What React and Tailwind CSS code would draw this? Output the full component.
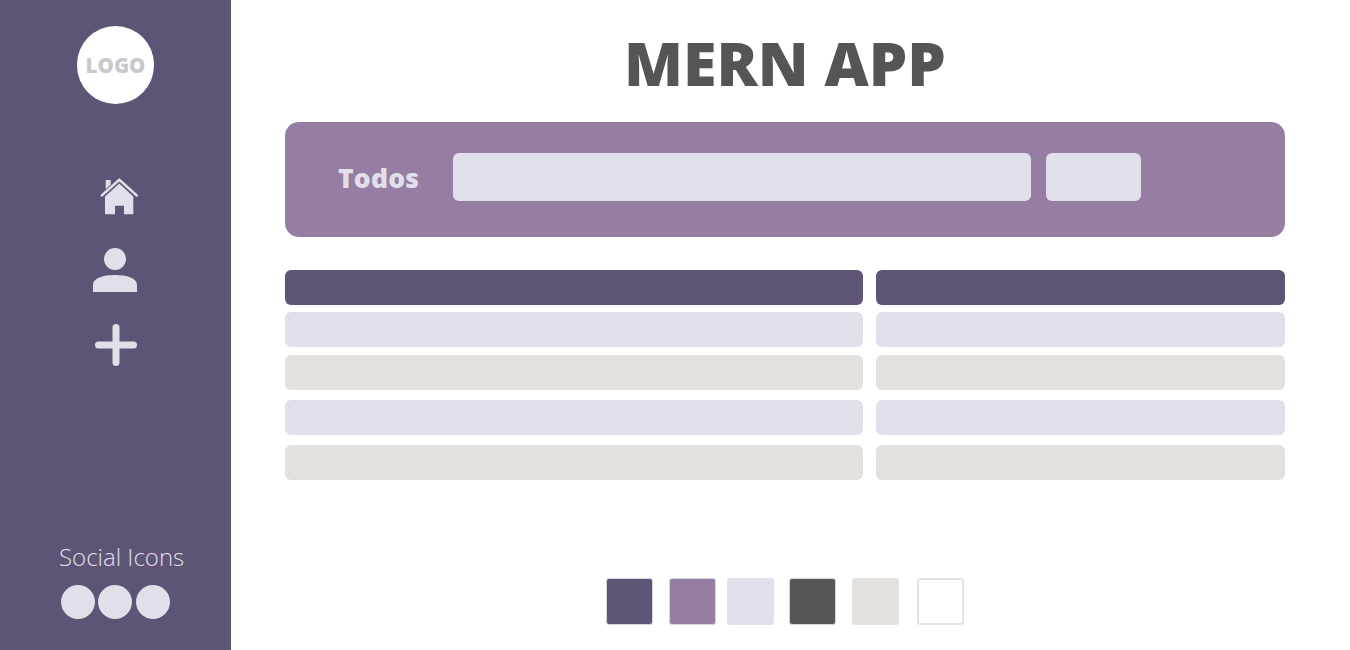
const rows = [
  ["bg-[#5e5475]", "mt-0"],
  ["bg-[#e1dfea]", "mt-[7px]"],
  ["bg-[#e4e0dd]", "mt-[8px]"],
  ["bg-[#e1dfea]", "mt-[10px]"],
  ["bg-[#e4e0dd]", "mt-[10px]"],
];

function Home() {
  return (
    <svg width="40" height="39" viewBox="0 0 40 39" className="block">
      <path d="M5.700 3h5v4.500l-5 4.800z" fill="#e1dfea" />
      <path d="M1.900 18.400 19.300 2.700l17.400 15.700" fill="none" stroke="#e1dfea" strokeWidth="2.600" strokeLinecap="round" strokeLinejoin="miter" />
      <path fillRule="evenodd" d="M5 19.500 19.300 6.500l14 13V37.300H24V28.700H15V37.300H5z" fill="#e1dfea" />
    </svg>
  );
}

function User() {
  return (
    <svg width="44" height="44" viewBox="0 0 44 44" className="block">
      <circle cx="22" cy="11" r="11" fill="#e1dfea" />
      <path d="M0 44V37C0 30 10 27 22 27s22 3 22 10v7z" fill="#e1dfea" />
    </svg>
  );
}

function Plus() {
  return (
    <svg width="42" height="42" viewBox="0 0 42 42" className="block">
      <path d="M21 3.500v35M3.500 21h35" stroke="#e1dfea" strokeWidth="7" strokeLinecap="round" />
    </svg>
  );
}

function Swatch({ className }) {
  return <div className={`size-[47px] rounded-[3px] ${className}`} />;
}

export default function App() {
  return (
    <div className="flex h-[650px] w-[1350px] overflow-hidden bg-white font-['Open_Sans',sans-serif]">
      <aside className="flex h-full w-[231px] shrink-0 flex-col bg-[#5e5475]">
        <div className="ml-[77px] mt-[26px] flex h-[78px] w-[77px] items-center justify-center rounded-full bg-white text-[20.500px] font-extrabold leading-none text-[#c9c9cd]">
          LOGO
        </div>
        <div className="ml-[100px] mt-[73px]"><Home /></div>
        <div className="ml-[93px] mt-[32px]"><User /></div>
        <div className="ml-[95px] mt-[32px]"><Plus /></div>
        <div className="mt-auto pl-[59px] text-[24px] font-light leading-[32px] whitespace-nowrap text-[#e1dfea]">Social Icons</div>
        <div className="mb-[31px] ml-[61px] mt-[12px] flex gap-[3.300px]">
          <div className="size-[34px] rounded-full bg-[#e1dfea]" />
          <div className="size-[34px] rounded-full bg-[#e1dfea]" />
          <div className="size-[34px] rounded-full bg-[#e1dfea]" />
        </div>
      </aside>
      <main className="flex w-[1054px] flex-col pl-[54px]">
        <h1 className="mt-[23px] text-center text-[61px] font-extrabold leading-[80px] text-[#555555]">MERN APP</h1>
        <section className="mt-[19px] flex h-[115px] w-[1000px] items-start rounded-[14px] bg-[#967ea3] pl-[53px] pt-[31px]">
          <div className="w-[115px] pt-[12px] text-[26.500px] font-extrabold leading-none tracking-[0.2px] text-[#e1dfea]">Todos</div>
          <div className="h-[48px] w-[578px] rounded-[6px] bg-[#e1dfea]" />
          <div className="ml-[15px] h-[48px] w-[95px] rounded-[6px] bg-[#e1dfea]" />
        </section>
        <section className="mt-[33px] grid w-[1000px] grid-cols-[578px_409px] gap-x-[13px]">
          <div>
            {rows.map(([bg, mt], i) => (
              <div key={i} className={`h-[35px] rounded-[6px] ${bg} ${mt}`} />
            ))}
          </div>
          <div>
            {rows.map(([bg, mt], i) => (
              <div key={i} className={`h-[35px] rounded-[6px] ${bg} ${mt}`} />
            ))}
          </div>
        </section>
        <section className="mt-[98px] flex pl-[321px]">
          <Swatch className="border border-[#d5d3dc] bg-[#5e5475]" />
          <Swatch className="ml-[16px] border border-[#d5d3dc] bg-[#967ea3]" />
          <Swatch className="ml-[11px] bg-[#e1dfea]" />
          <Swatch className="ml-[15px] border border-[#d5d3dc] bg-[#555555]" />
          <Swatch className="ml-[16px] bg-[#e4e0dd]" />
          <Swatch className="ml-[18px] border-2 border-[#e3e3e6] bg-white" />
        </section>
      </main>
    </div>
  );
}
